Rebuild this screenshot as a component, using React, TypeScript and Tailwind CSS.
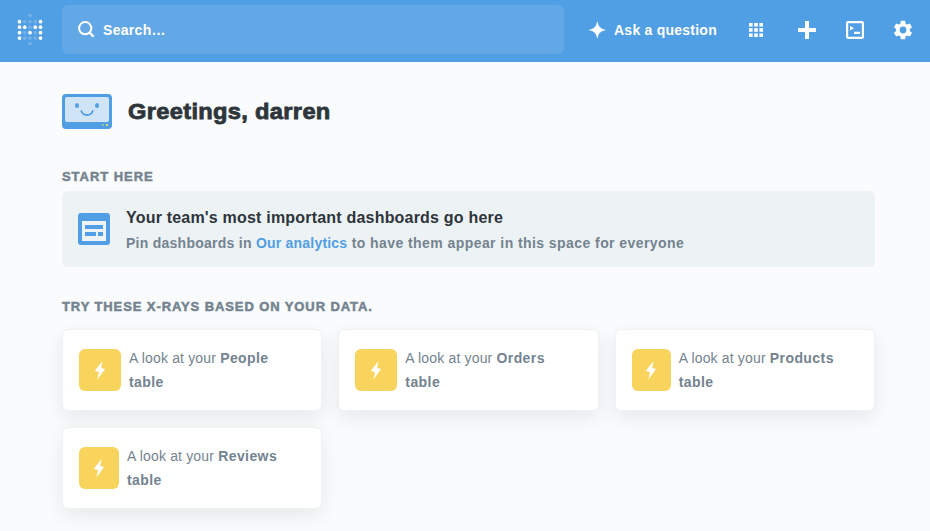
import React from "react";

const LOGO_ROWS = ["..f..", "wfffw", "wwfww", "wfwfw", "wfffw", "..f.."];
const LOGO_Y = [3.6, 9.7, 15.2, 20.7, 26.1, 31.5];

function Logo() {
  return (
    <svg width="30" height="38" viewBox="0 0 30 38" className="ml-[15px] shrink-0">
      {LOGO_ROWS.map((row, r) =>
        row.split("").map((c, i) =>
          c === "." ? null : (
            <circle key={`${r}-${i}`} cx={4.5 + i * 5.25} cy={LOGO_Y[r]} r="1.85" fill="#fff" opacity={c === "w" ? 1 : 0.2} />
          ),
        ),
      )}
    </svg>
  );
}

function Header() {
  return (
    <header className="flex h-[62px] items-center bg-[#509ee3] text-white">
      <Logo />
      <div className="mt-[-3px] ml-[17px] flex h-[49px] w-[502px] shrink-0 items-center rounded-md bg-[#62a8e6] pl-4">
        <svg width="17" height="17" viewBox="0 0 17 17" fill="none" stroke="#fff" strokeWidth="2">
          <circle cx="7.2" cy="7.2" r="6.1" />
          <path d="M11.5 11.5L15.6 15.6" strokeWidth="2.4" />
        </svg>
        <span className="mt-[2px] ml-2 text-[14px] font-bold tracking-[0.3px]">Search…</span>
      </div>
      <div className="mt-[-2px] ml-[25px] flex shrink-0 items-center">
        <svg width="17" height="18" viewBox="0 0 17 18" fill="#fff">
          <path d="M8.3 0.8Q9.3 8 16.3 9Q9.3 10 8.3 17.2Q7.3 10 0.3 9Q7.3 8 8.3 0.8Z" stroke="#fff" strokeWidth="0.4" />
        </svg>
        <span className="ml-[8px] w-[104px] text-[14px] font-bold tracking-[0.24px] whitespace-nowrap">Ask a question</span>
      </div>
      <svg width="14" height="14" viewBox="0 0 14 14" fill="#fff" className="mt-[-2px] ml-[31px] shrink-0">
        {[0, 5.2, 10.4].map((y) => [0, 5.2, 10.4].map((x) => <rect key={`${x}-${y}`} x={x} y={y} width="3.6" height="3.6" />))}
      </svg>
      <svg width="18" height="18" viewBox="0 0 18 18" fill="#fff" className="mt-[-2px] ml-[35px] shrink-0">
        <path d="M7 0h4v7h7v4h-7v7H7v-7H0V7h7z" />
      </svg>
      <svg width="18" height="18" viewBox="0 0 18 18" className="mt-[-2px] ml-[30px] shrink-0">
        <rect x="1.1" y="1.1" width="15.8" height="15.8" rx="1" fill="none" stroke="#fff" strokeWidth="2.2" />
        <path d="M4 4.8l4 2.4L4 9.6zM8 10.8h6v2.2H8z" fill="#fff" />
      </svg>
      <svg width="22" height="22" viewBox="0 0 24 24" fill="#fff" className="mt-[-2px] ml-[28px] shrink-0">
        <path d="M19.43 12.98c.04-.32.07-.64.07-.98s-.03-.66-.07-.98l2.11-1.65c.19-.15.24-.42.12-.64l-2-3.46c-.12-.22-.39-.3-.61-.22l-2.49 1c-.52-.4-1.08-.73-1.69-.98l-.38-2.65A.488.488 0 0014 2h-4c-.25 0-.46.18-.49.42l-.38 2.65c-.61.25-1.17.59-1.69.98l-2.49-1c-.23-.09-.49 0-.61.22l-2 3.46c-.13.22-.07.49.12.64l2.11 1.65c-.04.32-.07.65-.07.98s.03.66.07.98l-2.11 1.65c-.19.15-.24.42-.12.64l2 3.46c.12.22.39.3.61.22l2.49-1c.52.4 1.08.73 1.69.98l.38 2.65c.03.24.24.42.49.42h4c.25 0 .46-.18.49-.42l.38-2.65c.61-.25 1.17-.59 1.69-.98l2.49 1c.23.09.49 0 .61-.22l2-3.46c.12-.22.07-.49-.12-.64l-2.11-1.65zM12 15.7A3.7 3.7 0 1112 8.3a3.7 3.7 0 010 7.4z" />
      </svg>
    </header>
  );
}

function Metabot() {
  return (
    <svg width="50" height="35" viewBox="0 0 50 35" className="shrink-0">
      <rect width="50" height="35" rx="4" fill="#509ee3" />
      <rect x="3" y="3" width="44" height="25" rx="2" fill="#d0e4f7" />
      <ellipse cx="15" cy="11.5" rx="2" ry="2.6" fill="#509ee3" />
      <ellipse cx="35" cy="11.5" rx="2" ry="2.6" fill="#509ee3" />
      <path d="M19.3 17C21 22.3 29 22.3 30.7 17" fill="none" stroke="#509ee3" strokeWidth="1.8" strokeLinecap="round" />
      <rect x="40" y="30" width="2" height="2" fill="#9cc09f" />
      <rect x="44" y="30" width="2" height="2" fill="#e4d179" />
    </svg>
  );
}

function XrayCard({ name, iconWidth }: { name: string; iconWidth: string }) {
  return (
    <div className="flex h-[82px] items-center rounded-md border border-[#edf2f5] bg-white pl-4 shadow-[0_7px_20px_rgba(0,0,0,0.08)]">
      <div className={`flex h-[42px] shrink-0 items-center justify-center rounded-md bg-[#f9d45c] ${iconWidth}`}>
        <svg width="12" height="20" viewBox="0 0 12 20" fill="#fff">
          <path d="M8.4 1L0.8 11L5 12L3.4 19.5L11.1 8.9L7.2 7.9Z" />
        </svg>
      </div>
      <p className="ml-2 w-[165px] text-[14px] leading-6 tracking-[0.16px] text-[#74838f]">
        A look at your{" "}
        <b className="tracking-[0.42px]">
          {name}
          <br />
          table
        </b>
      </p>
    </div>
  );
}

export default function App() {
  return (
    <div className="h-[531px] w-[930px] overflow-hidden bg-[#f9fbfc] font-['Liberation_Sans',Arial,sans-serif]">
      <Header />
      <main className="ml-[62px] w-[813px] pt-8">
        <div className="flex h-[35px] items-center">
          <Metabot />
          <h1 className="ml-4 origin-left scale-x-[1.075] text-[22px] font-bold whitespace-nowrap tracking-[0.3px] text-[#2e353b] [-webkit-text-stroke:0.8px_#2e353b]">Greetings, darren</h1>
        </div>
        <h2 className="mt-[39px] text-[13px] leading-[18px] font-bold tracking-[0.95px] text-[#74838f] [-webkit-text-stroke:0.5px_#74838f]">START HERE</h2>
        <section className="mt-[5px] flex h-[76px] items-center rounded-md bg-[#edf2f5] pl-4">
          <svg width="32" height="32" viewBox="0 0 32 32" fill="#509ee3" className="shrink-0">
            <path fillRule="evenodd" d="M3 0h26a3 3 0 013 3v26a3 3 0 01-3 3H3a3 3 0 01-3-3V3a3 3 0 013-3zM4 8v20h24V8z" />
            <path d="M7 12h18v4H7zM7 19h11v4H7zM20 19h5v4h-5z" />
          </svg>
          <div className="mt-[2px] ml-4 font-bold whitespace-nowrap">
            <p className="text-[16px] leading-6 tracking-[0.2px] text-[#2e353b]">Your team's most important dashboards go here</p>
            <p className="mt-[1px] text-[14px] leading-6 tracking-[0.26px] text-[#74838f]">
              Pin dashboards in <a className="tracking-[0.21px] text-[#509ee3]">Our analytics</a>
              <span className="tracking-[0.43px]"> to have them appear in this space for everyone</span>
            </p>
          </div>
        </section>
        <h2 className="mt-[31px] text-[13px] leading-[18px] font-bold tracking-[0.9px] text-[#74838f] [-webkit-text-stroke:0.5px_#74838f]">TRY THESE X-RAYS BASED ON YOUR DATA.</h2>
        <div className="mt-[13px] grid grid-cols-3 gap-4">
          <XrayCard name="People" iconWidth="w-[42px]" />
          <XrayCard name="Orders" iconWidth="w-[42px]" />
          <XrayCard name="Products" iconWidth="w-[39px]" />
          <XrayCard name="Reviews" iconWidth="w-[40px]" />
        </div>
      </main>
    </div>
  );
}
